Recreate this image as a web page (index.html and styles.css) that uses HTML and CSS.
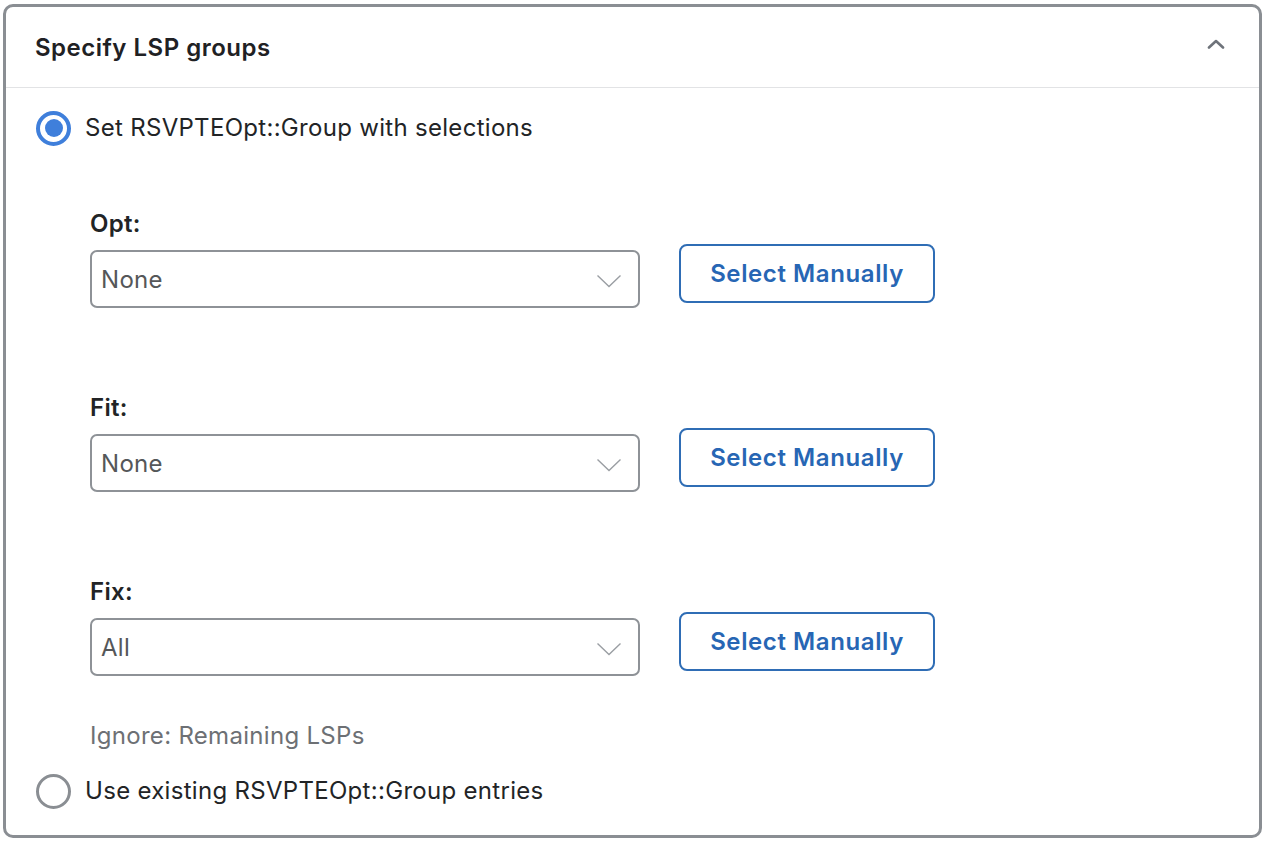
FILE: index.html
```html
<!DOCTYPE html>
<html lang="en">
<head>
<meta charset="utf-8">
<title>Specify LSP groups</title>
<link rel="stylesheet" href="styles.css">
</head>
<body>
<section class="card">
  <header class="card-header">
    <h2 class="card-title">Specify LSP groups</h2>
    <svg class="collapse-icon" width="18" height="10" viewBox="0 0 18 10" aria-hidden="true">
      <path d="M2 8.5 L9 2 L16 8.5" fill="none" stroke="#6e737a" stroke-width="2.6" stroke-linecap="round" stroke-linejoin="round"/>
    </svg>
  </header>
  <div class="card-body">
    <label class="radio-row">
      <span class="radio radio-checked"><span class="radio-dot"></span></span>
      <span class="radio-text">Set RSVPTEOpt::Group with selections</span>
    </label>

    <div class="groups">
      <div class="group">
        <div class="field">
          <div class="field-label">Opt:</div>
          <div class="select">
            <span class="select-value">None</span>
            <svg class="select-chevron" width="26" height="14" viewBox="0 0 26 14" aria-hidden="true"><path d="M1.5 1.5 L13 12.5 L24.5 1.5" fill="none" stroke="#9a9ea3" stroke-width="1.4"/></svg>
          </div>
        </div>
        <button class="btn-outline">Select Manually</button>
      </div>

      <div class="group">
        <div class="field">
          <div class="field-label">Fit:</div>
          <div class="select">
            <span class="select-value">None</span>
            <svg class="select-chevron" width="26" height="14" viewBox="0 0 26 14" aria-hidden="true"><path d="M1.5 1.5 L13 12.5 L24.5 1.5" fill="none" stroke="#9a9ea3" stroke-width="1.4"/></svg>
          </div>
        </div>
        <button class="btn-outline">Select Manually</button>
      </div>

      <div class="group">
        <div class="field">
          <div class="field-label">Fix:</div>
          <div class="select">
            <span class="select-value">All</span>
            <svg class="select-chevron" width="26" height="14" viewBox="0 0 26 14" aria-hidden="true"><path d="M1.5 1.5 L13 12.5 L24.5 1.5" fill="none" stroke="#9a9ea3" stroke-width="1.4"/></svg>
          </div>
        </div>
        <button class="btn-outline">Select Manually</button>
      </div>

      <div class="ignore-note">Ignore: Remaining LSPs</div>
    </div>

    <label class="radio-row radio-row-last">
      <span class="radio"></span>
      <span class="radio-text">Use existing RSVPTEOpt::Group entries</span>
    </label>
  </div>
</section>
</body>
</html>
```

FILE: styles.css
```css
* { box-sizing: border-box; }

html, body {
  margin: 0;
  padding: 0;
  background: #ffffff;
}

body {
  font-family: Inter, "Liberation Sans", Arial, sans-serif;
  color: #222426;
  font-size: 24px;
  line-height: 28px;
  letter-spacing: 0.3px;
  padding: 4px 3px 5px 3px;
}

.card {
  border: 3px solid #8a8e93;
  border-radius: 10px;
  background: #fff;
}

.card-header {
  height: 81px;
  display: flex;
  align-items: center;
  justify-content: space-between;
  padding: 0 34px 0 29px;
  border-bottom: 1px solid #e2e3e5;
}

.card-title {
  margin: 0;
  font-size: 24px;
  font-weight: 600;
  letter-spacing: 0.5px;
  color: #1f2124;
  position: relative;
  top: 1px;
}

.collapse-icon {
  display: block;
  position: relative;
  top: -3px;
}

.card-body {
  padding: 23px 30px 27px 30px;
}

.radio-row {
  display: flex;
  align-items: center;
  gap: 14px;
  height: 34px;
}

.radio {
  width: 35px;
  height: 35px;
  border-radius: 50%;
  border: 3px solid #8a8e93;
  display: flex;
  align-items: center;
  justify-content: center;
  flex: none;
}

.radio-checked {
  border: 4px solid #3f7fdb;
}

.radio-dot {
  width: 18px;
  height: 18px;
  border-radius: 50%;
  background: #3f7fdb;
}

.radio-text {
  color: #222426;
}

.groups {
  padding-left: 54px;
  padding-top: 65px;
}

.group {
  display: flex;
  align-items: flex-end;
  gap: 39px;
  margin-bottom: 86px;
}

.group:nth-child(3) {
  margin-bottom: 46px;
}

.field {
  display: flex;
  flex-direction: column;
  gap: 12px;
}

.field-label {
  font-weight: 600;
  color: #222426;
}

.select {
  width: 550px;
  height: 58px;
  border: 2px solid #8e9297;
  border-radius: 7px;
  display: flex;
  align-items: center;
  justify-content: space-between;
  padding: 0 16px 0 9px;
}

.select-value {
  color: #555759;
  position: relative;
  top: 1px;
}

.select-chevron {
  display: block;
  margin-top: 4px;
}

.btn-outline {
  width: 256px;
  height: 59px;
  margin-bottom: 5px;
  border: 2px solid #2f6db5;
  border-radius: 8px;
  background: #fff;
  color: #2766b4;
  font-family: inherit;
  font-size: 24px;
  font-weight: 600;
  letter-spacing: 0.6px;
  padding: 0;
  cursor: pointer;
}

.ignore-note {
  color: #6d7074;
  margin-bottom: 24px;
}
```
